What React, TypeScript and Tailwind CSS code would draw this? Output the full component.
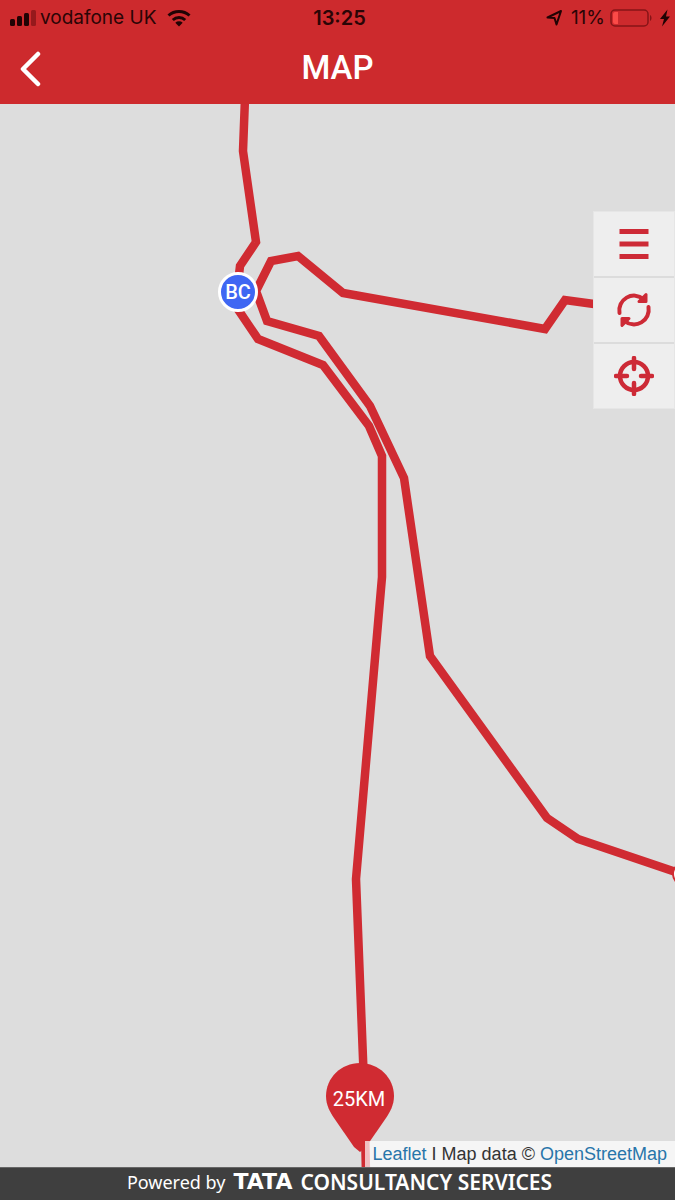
import type { ReactNode } from 'react';

interface MapButtonProps {
  label: string;
  children: ReactNode;
}

const routes = [
  '245,-6 243,47 256,138 240,162 237,188 237,204 258,235 323,261 369,322 382,352 382,473 356,775 364,980 366,1070',
  '594,200 565,196 545,225 343,189 298,152 271,157 256,187 267,217 319,232 370,302 404,374 430,552 547,714 578,735 679,769',
];

export default function App() {
  return (
    <div className="flex min-h-screen flex-col bg-[#dddddd]">
      <header className="bg-[#cd2a2d]">
        <StatusBar />
        <NavBar />
      </header>
      <RouteMap />
      <Footer />
    </div>
  );
}

function StatusBar() {
  return (
    <div className="grid h-8 grid-cols-[1fr_auto_1fr] items-center pt-1 pr-1 pl-2 font-['Inter',sans-serif] text-[19px] leading-6 text-[#2a0506]">
      <div className="flex items-center gap-2">
        <div className="flex items-center gap-1">
          <svg width="28" height="18" viewBox="0 0 28 18" aria-hidden="true">
            <g fill="#210304">
              <rect x="2" y="10" width="5" height="7" rx="1.5" />
              <rect x="9" y="7" width="5" height="10" rx="1.5" />
              <rect x="16" y="4" width="5" height="13" rx="1.5" />
            </g>
            <rect x="23" y="1" width="5" height="16" rx="1.5" fill="#96191c" />
          </svg>
          <span>vodafone UK</span>
        </div>
        <svg width="30" height="18" viewBox="-2 0 30 18" fill="none" stroke="#210304" strokeWidth="3" aria-hidden="true">
          <path d="M2.5 6.5a15.5 15.5 0 0 1 21 0" />
          <path d="M6.8 11a9.2 9.2 0 0 1 12.4 0" />
          <path d="M13 17.5 9.3 13.8a5.4 5.4 0 0 1 7.4 0Z" fill="#210304" stroke="none" />
        </svg>
      </div>
      <span className="text-xl leading-6 font-semibold">13:25</span>
      <div className="flex items-center justify-end gap-1">
        <svg className="mr-1" width="18" height="18" viewBox="0 0 18 18" fill="none" aria-hidden="true">
          <path d="M2.5 8.5 16 2 11.5 15.5 9.5 9Z" stroke="#210304" strokeWidth="2" strokeLinejoin="round" />
        </svg>
        <span>11%</span>
        <svg width="46" height="20" viewBox="0 0 46 20" aria-hidden="true">
          <rect x="2" y="2" width="37" height="16" rx="4" fill="none" stroke="#861417" strokeWidth="1.5" />
          <path d="M6 4h3v12H6a2 2 0 0 1-2-2V6a2 2 0 0 1 2-2Z" fill="#fb4b48" />
          <path d="M41 7c2 1 2 5 0 6Z" fill="#861417" />
        </svg>
        <svg width="12" height="18" viewBox="0 0 12 18" aria-hidden="true">
          <path d="M8.5 0.5 1 10h4L3 17.5 11 7.5H7Z" fill="#210304" />
        </svg>
      </div>
    </div>
  );
}

function NavBar() {
  return (
    <div className="grid h-18 grid-cols-[64px_1fr_64px] items-center">
      <button type="button" aria-label="Back" className="flex h-16 items-center justify-center">
        <svg width="24" height="38" viewBox="0 0 24 38" fill="none" stroke="#fff" strokeWidth="4.5" strokeLinecap="round" strokeLinejoin="round">
          <path d="M18 5 3 20l15 15" />
        </svg>
      </button>
      <h1 className="text-center font-['Roboto',sans-serif] text-[33px] leading-10 font-medium text-white">MAP</h1>
    </div>
  );
}

function RouteMap() {
  return (
    <main className="relative flex-1 overflow-hidden">
      <svg className="absolute inset-0 h-full w-full" aria-hidden="true">
        {routes.map((points) => (
          <polyline key={points} points={points} fill="none" stroke="#d02b32" strokeWidth="8.5" />
        ))}
        <circle cx="684" cy="770" r="11" fill="#fff" stroke="#d02b32" strokeWidth="2" />
        <path
          d="M360 959c19 0 34 15 34 33 0 9-4 16-8 22l-20 29-6 5-6-5-20-29c-4-6-8-13-8-22 0-18 15-33 34-33Z"
          fill="#d02b32"
        />
      </svg>

      <div className="absolute top-[168px] left-[218px] flex size-10 items-center justify-center rounded-full border-3 border-white bg-[#3f67f3] font-['Roboto',sans-serif] text-xl leading-6 font-medium text-white">
        BC
      </div>
      <div className="absolute top-[983px] left-[326px] w-[66px] text-center font-['Roboto',sans-serif] text-xl leading-6 text-white">
        25KM
      </div>

      <div className="absolute top-[107px] right-0 flex w-[82px] flex-col divide-y-2 divide-[#dcdcdc] border border-[#e6e6e6] bg-[#eeeeee] text-[#cd2a36]">
        <MapButton label="Menu">
          <path d="M5.5 7.5h29M5.5 20h29M5.5 32.5h29" strokeWidth="5" />
        </MapButton>
        <MapButton label="Refresh">
          <g strokeLinecap="round" strokeLinejoin="round">
            <path d="M5.5 23A14.8 14.8 0 0 1 29.500 9M34.500 17A14.800 14.800 0 0 1 10.500 31" strokeWidth="4" />
            <path d="M32 4.500v7h-7ZM8 35.500v-7h7Z" fill="currentColor" strokeWidth="3" />
          </g>
        </MapButton>
        <MapButton label="Find my location">
          <circle cx="20" cy="20" r="14" />
          <path d="M20 2v11M20 27v11M2 20h11M27 20h11" strokeLinecap="round" />
        </MapButton>
      </div>

      <div className="absolute right-0 bottom-0 bg-white/70 px-2 font-['Liberation_Sans',sans-serif] text-lg leading-[26px] whitespace-nowrap text-[#333333]">
        <a href="#leaflet" className="text-[#2875aa]">Leaflet</a>
        {' I Map data © '}
        <a href="#openstreetmap" className="text-[#2875aa]">OpenStreetMap</a>
      </div>
    </main>
  );
}

function MapButton({ label, children }: MapButtonProps) {
  return (
    <button type="button" aria-label={label} className="box-content flex h-16 items-center justify-center">
      <svg width="40" height="40" viewBox="0 0 40 40" fill="none" stroke="currentColor" strokeWidth="4.5">
        {children}
      </svg>
    </button>
  );
}

function Footer() {
  return (
    <footer className="flex h-[33px] items-center justify-center gap-2 border-t border-[#666666] bg-[#3f3f3f] pb-1 pl-1 text-white">
      <span className="font-['Noto_Sans',sans-serif] text-lg leading-6">Powered by</span>
      <span className="font-['DejaVu_Sans',sans-serif] text-[22px] leading-6 font-bold">TATA</span>
      <span className="font-['Noto_Sans',sans-serif] text-[21px] leading-6 font-semibold">CONSULTANCY SERVICES</span>
    </footer>
  );
}
